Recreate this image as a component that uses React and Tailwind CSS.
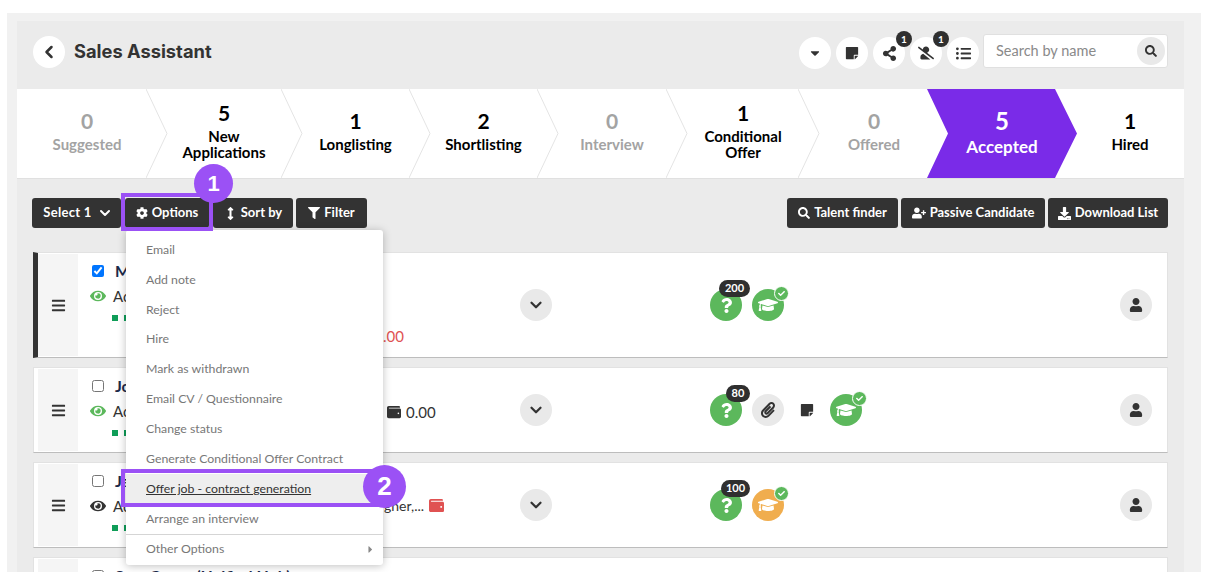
import React from 'react'
import { ChevronLeft, ChevronDown } from 'lucide-react'
import {
    FaCog, FaFilter, FaSearch, FaUserPlus, FaDownload, FaStickyNote, FaShareAlt, FaUserSlash, FaListUl,
    FaCaretDown, FaCaretRight, FaEye, FaWallet, FaQuestion, FaPaperclip, FaUser, FaGraduationCap, FaCheck, FaBars,
    FaArrowsAltV,
} from 'react-icons/fa'

const stages = [
    { count: 0, label: ['Suggested'], w: 'w-[129px] pl-[11px]', muted: true },
    { count: 5, label: ['New', 'Applications'], w: 'w-[135px] pl-[21px]' },
    { count: 1, label: ['Longlisting'], w: 'w-[128px] pl-[21px]' },
    { count: 2, label: ['Shortlisting'], w: 'w-[128px] pl-[21px]' },
    { count: 0, label: ['Interview'], w: 'w-[129px] pl-[21px]', muted: true },
    { count: 1, label: ['Conditional', 'Offer'], w: 'w-[132px] pl-[22px]' },
    { count: 0, label: ['Offered'], w: 'w-[129px] pl-[23px]', muted: true, last: true },
]

const menuItems = [
    'Email',
    'Add note',
    'Reject',
    'Hire',
    'Mark as withdrawn',
    'Email CV / Questionnaire',
    'Change status',
    'Generate Conditional Offer Contract',
]

const Stage = ({ stage }) => (
    <div className={`${stage.w} relative shrink-0 flex flex-col items-center justify-center leading-none pb-[5px]`}>
        <div className={`text-[21px] font-bold ${stage.muted ? 'text-[#a3a3a3]' : 'text-black'}`}>{stage.count}</div>
        <div className={`mt-[5px] text-center text-[15px] leading-4 font-bold ${stage.muted ? 'text-[#a3a3a3]' : 'text-black'}`}>
            {stage.label.map(line => <div key={line}>{line}</div>)}
        </div>
        {!stage.last && (
            <svg className="absolute left-full top-0 z-10" width="22" height="89" viewBox="0 0 22 89" fill="none">
                <path d="M0 0 L21 44.5 L0 89" stroke="#e4e4e4" strokeWidth="1" />
            </svg>
        )}
    </div>
)

const DarkButton = ({ children, className = '' }) => (
    <button className={`h-[30px] flex items-center justify-center gap-1 rounded-[3px] bg-[#333333] text-white text-[13px] font-bold ${className}`}>
        {children}
    </button>
)

const RoundIcon = ({ children, className = 'bg-[#e9e9e9]' }) => (
    <div className={`w-8 h-8 rounded-full flex items-center justify-center shrink-0 ${className}`}>{children}</div>
)

const HeaderIcon = ({ children, badge }) => (
    <div className="relative w-8 h-8 mt-[3px] rounded-full bg-white flex items-center justify-center shrink-0">
        {children}
        {badge && (
            <span className="absolute -top-[6px] right-[-7px] w-4 h-4 rounded-full bg-[#2f2f2f] text-white text-[10px] font-bold flex items-center justify-center">
                {badge}
            </span>
        )}
    </div>
)

const Question = ({ score, badgeClass }) => (
    <div className="relative">
        <RoundIcon className="bg-[#5cb85c]">
            <FaQuestion className="text-white text-[15px]" />
        </RoundIcon>
        <span className={`absolute -top-[9px] right-[-8px] h-[17px] rounded-full bg-[#2f2f2f] text-white text-[11px] font-bold flex items-center justify-center ${badgeClass}`}>
            {score}
        </span>
    </div>
)

const Education = ({ color = 'bg-[#5cb85c]' }) => (
    <div className="relative">
        <RoundIcon className={color}>
            <FaGraduationCap className="text-white text-[20px]" />
        </RoundIcon>
        <span className="absolute -top-[3px] right-[-5px] w-[15px] h-[15px] rounded-full bg-[#5cb85c] border border-white flex items-center justify-center">
            <FaCheck className="text-white text-[7px]" />
        </span>
    </div>
)

const CandidateRow = ({ height, checked, name, eye, extra, icons, selected, gap = 'mb-[9px]' }) => (
    <div className={`${height} ${gap} flex bg-white border border-[#e2e2e2] border-b-[#bdbdbd] shrink-0 ${selected ? 'border-l-[5px] border-l-[#333333]' : 'pl-[4px]'}`}>
        <div className="w-[40px] bg-[#f5f5f5] flex items-center justify-center shrink-0 my-[1px]">
            <FaBars className="text-[#333333] text-[15px]" />
        </div>
        <div className="w-[22px] shrink-0" />
        <div className="w-[420px] shrink-0 pt-[8px] relative">
            <div className="flex items-center h-5 -ml-[8px]">
                <input type="checkbox" readOnly checked={checked} className="w-3 h-3 accent-[#0075ff]" />
                <span className="text-[16px] font-bold text-[#1c2a4a] ml-[11px]">{name}</span>
            </div>
            <div className="flex items-center gap-[7px] -ml-[10px] mt-[5px] h-5">
                <FaEye className={`text-[16px] ${eye}`} />
                <span className="text-[15px] text-[#333333]">Active</span>
            </div>
            <div className="mt-[9px] ml-[12px] flex gap-[6px]">
                <span className="w-[6px] h-[6px] bg-[#0f9d58]" />
                <span className="w-[6px] h-[6px] bg-[#0f9d58]" />
            </div>
            {extra}
        </div>
        <div className="w-[32px] flex items-center shrink-0">
            <RoundIcon>
                <ChevronDown className="w-[18px] h-[18px] text-[#333333]" strokeWidth={3} />
            </RoundIcon>
        </div>
        <div className="w-[158px] shrink-0" />
        <div className="flex-1 flex items-center gap-[10px]">{icons}</div>
        <div className="mr-[15px] flex items-center">
            <RoundIcon>
                <FaUser className="text-[#333333] text-[14px]" />
            </RoundIcon>
        </div>
    </div>
)

const App = () => {
    return (
        <div className="w-[1215px] h-[581px] bg-white overflow-hidden pt-[13px] pl-[7px] font-['Lato',sans-serif]">
            <div className="relative w-[1194px] h-[559px] bg-[#f1f1f1] pt-[8px] pl-[10px] overflow-hidden">
                <div className="w-[1167px] h-[551px] bg-[#ebebeb] flex flex-col overflow-hidden">
                    {/* Title bar */}
                    <div className="h-[68px] shrink-0 flex items-start pt-[15px] px-[16px]">
                        <div className="w-8 h-8 rounded-full bg-white flex items-center justify-center">
                            <ChevronLeft className="w-5 h-5 text-[#333333]" strokeWidth={3} />
                        </div>
                        <h1 className="ml-[9px] h-[31px] flex items-center text-[18.3px] font-bold text-[#333333] font-['Inter',sans-serif]">Sales Assistant</h1>
                        <div className="ml-auto -mt-[2px] flex items-start gap-[5px]">
                            <HeaderIcon><FaCaretDown className="text-[#333333] text-[14px]" /></HeaderIcon>
                            <HeaderIcon><FaStickyNote className="text-[#333333] text-[14px]" /></HeaderIcon>
                            <HeaderIcon badge="1"><FaShareAlt className="text-[#333333] text-[15px]" /></HeaderIcon>
                            <HeaderIcon badge="1"><FaUserSlash className="text-[#333333] text-[16px]" /></HeaderIcon>
                            <HeaderIcon><FaListUl className="text-[#333333] text-[15px]" /></HeaderIcon>
                            <div className="w-[185px] h-[34px] ml-[-1px] bg-white rounded-[3px] border border-[#e0e0e0] flex items-center pl-[12px] pr-[2px]">
                                <span className="text-[14.5px] text-[#8a8a8a]">Search by name</span>
                                <div className="ml-auto w-[28px] h-[28px] rounded-full bg-[#e9e9e9] flex items-center justify-center">
                                    <FaSearch className="text-[#333333] text-[12px]" />
                                </div>
                            </div>
                        </div>
                    </div>

                    {/* Pipeline */}
                    <div className="h-[90px] shrink-0 bg-white border-b border-[#e0e0e0] flex relative">
                        {stages.map(stage => <Stage key={stage.label[0]} stage={stage} />)}
                        <div className="relative w-[128px] h-[89px] pl-[22px] shrink-0 flex flex-col items-center justify-center z-10">
                            <svg className="absolute left-0 top-0 max-w-none" width="150" height="89" viewBox="0 0 150 89">
                                <path d="M0 0 H128 L150 44.5 L128 89 H0 L21 44.5 Z" fill="#7a2be8" />
                            </svg>
                            <div className="relative text-white text-[24px] font-bold leading-none -mt-[4px]">5</div>
                            <div className="relative text-white text-[17px] font-bold mt-[6px] leading-4">Accepted</div>
                        </div>
                        <div className="flex-1 flex flex-col items-center justify-center leading-none pl-[21px] pb-[5px]">
                            <div className="text-[21px] font-bold text-black">1</div>
                            <div className="mt-[5px] text-[15px] leading-4 font-bold text-black">Hired</div>
                        </div>
                    </div>

                    {/* Toolbar */}
                    <div className="h-[30px] shrink-0 mt-[19px] flex pl-[15px] pr-[16px]">
                        <div className="flex">
                            <DarkButton className="w-[89px] gap-[5px] pl-[3px] tracking-[0.3px]">Select 1 <ChevronDown className="w-4 h-4" strokeWidth={3} /></DarkButton>
                            <DarkButton className="w-[84px] ml-[4px]"><FaCog className="text-[12px]" /> Options</DarkButton>
                            <DarkButton className="w-[80px] ml-[4px]"><FaArrowsAltV className="text-[13px]" /> Sort by</DarkButton>
                            <DarkButton className="w-[71px] ml-[3px]"><FaFilter className="text-[12px]" /> Filter</DarkButton>
                        </div>
                        <div className="ml-auto flex gap-[3px]">
                            <DarkButton className="w-[111px]"><FaSearch className="text-[12px]" /> Talent finder</DarkButton>
                            <DarkButton className="w-[144px]"><FaUserPlus className="text-[14px]" /> Passive Candidate</DarkButton>
                            <DarkButton className="w-[120px]"><FaDownload className="text-[13px]" /> Download List</DarkButton>
                        </div>
                    </div>

                    {/* Candidate rows */}
                    <div className="mt-[24px] px-[16px] flex flex-col">
                        <CandidateRow
                            height="h-[106px]"
                            checked
                            selected
                            name="Mary"
                            eye="text-[#5cb85c]"
                            extra={<div className="absolute left-[283px] top-[72px] text-[15px] text-[#e05252]">.00</div>}
                            icons={<><Question score="200" badgeClass="w-[31px]" /><Education /></>}
                        />
                        <CandidateRow
                            height="h-[86px]"
                            name="John"
                            eye="text-[#5cb85c]"
                            extra={<div className="absolute left-[287px] top-[33px] flex items-center gap-[5px] text-[15px] text-[#333333]"><FaWallet className="text-[14px]" /> 0.00</div>}
                            icons={<>
                                <Question score="80" badgeClass="w-[24px]" />
                                <RoundIcon><FaPaperclip className="text-[#333333] text-[16px]" /></RoundIcon>
                                <div className="w-[26px] flex justify-center"><FaStickyNote className="text-[#333333] text-[14px]" /></div>
                                <Education />
                            </>}
                        />
                        <CandidateRow
                            height="h-[86px]"
                            name="James"
                            eye="text-[#333333]"
                            extra={<div className="absolute left-[284px] top-[32px] flex items-center gap-[5px] text-[14px] text-[#333333]">gner,... <FaWallet className="text-[15px] text-[#e05252]" /></div>}
                            icons={<><Question score="100" badgeClass="w-[29px]" /><Education color="bg-[#f0ad4e]" /></>}
                        />
                        <CandidateRow height="h-[106px]" name="Sam Green (Unified Hub)" eye="text-[#5cb85c]" icons={null} gap="mb-0" />
                    </div>
                </div>

                {/* Options menu */}
                <div className="absolute left-[119px] top-[217px] w-[257px] h-[335px] bg-white rounded-[3px] shadow-[0_1px_8px_rgba(0,0,0,0.25)] z-20 text-[12.3px] text-[#777777] flex flex-col">
                    <div className="pt-[5px]">
                        {menuItems.map(item => (
                            <div key={item} className="h-[29.9px] flex items-center pl-[20px]">{item}</div>
                        ))}
                    </div>
                    <div className="h-[30px] flex items-center pl-[20px] bg-[#eeeeee] text-[#333333] underline">Offer job - contract generation</div>
                    <div className="h-[30px] flex items-center pl-[20px]">Arrange an interview</div>
                    <div className="h-[30px] border-t border-[#d5d5d5] flex items-center justify-between pl-[20px] pr-[7px]">
                        Other Options
                        <FaCaretRight className="text-[#888888] text-[11px]" />
                    </div>
                </div>

                {/* Annotation 1 */}
                <div className="absolute left-[114px] top-[180px] w-[92px] h-[38px] border-[4px] border-[#9b51f5] z-30" />
                <div className="absolute left-[187px] top-[151px] w-[39px] h-[39px] rounded-full bg-[#9b51f5] text-white text-[22px] font-semibold flex items-center justify-center z-30 font-['Liberation_Sans',sans-serif]">1</div>

                {/* Annotation 2 */}
                <div className="absolute left-[114px] top-[456px] w-[262px] h-[38px] border-[4px] border-[#9b51f5] z-30" />
                <div className="absolute left-[356px] top-[452px] w-[43px] h-[43px] rounded-full bg-[#9b51f5] text-white text-[26px] font-semibold flex items-center justify-center z-30 font-['Liberation_Sans',sans-serif]">2</div>
            </div>
        </div>
    )
}

export default App
